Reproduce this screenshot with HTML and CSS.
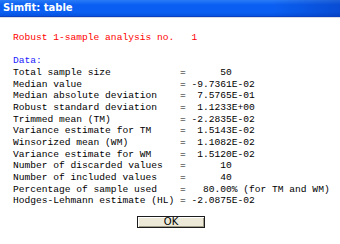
FILE: index.html
```html
<!DOCTYPE html>
<html lang="en">
<head>
    <meta charset="UTF-8">
    <meta name="viewport" content="width=device-width, initial-scale=1.0">
    <title>Simfit: table</title>
    <link rel="stylesheet" href="styles.css">
</head>
<body>
    <div class="window">
        <div class="titlebar">Simfit: table</div>

        <div class="content">
<pre class="report"><span class="heading">Robust 1-sample analysis no.   1</span>

<span class="section">Data:</span>
Total sample size            =      50
Median value                 = -9.7361E-02
Median absolute deviation    =  7.5765E-01
Robust standard deviation    =  1.1233E+00
Trimmed mean (TM)            = -2.2835E-02
Variance estimate for TM     =  1.5143E-02
Winsorized mean (WM)         =  1.1082E-02
Variance estimate for WM     =  1.5120E-02
Number of discarded values   =      10
Number of included values    =      40
Percentage of sample used    =   80.00% (for TM and WM)
Hodges-Lehmann estimate (HL) = -2.0875E-02</pre>

            <div class="actions">
                <button class="btn">OK</button>
            </div>
        </div>
    </div>
</body>
</html>
```

FILE: styles.css
```css
/* Window */
body {
    margin: 0;
    background: #ffffff;
}

.window {
    width: 340px;
    height: 244px;
    background: #ffffff;
    overflow: hidden;
}

.titlebar {
    height: 16px;
    padding-left: 3px;
    font-family: "DejaVu Sans", sans-serif;
    font-weight: bold;
    font-size: 10px;
    line-height: 15px;
    color: #ffffff;
    background: linear-gradient(90deg, rgba(0, 0, 0, 0) 80%, rgba(0, 20, 120, 0.25) 100%),
                linear-gradient(180deg, #2a7bf7 0%, #0a5ff2 30%, #0a5ff2 75%, #0652e0 100%);
    border-bottom: 1px solid #0a3fc0;
    box-shadow: 0 1px 0 #d8dde8;
}

/* Report text */
.content {
    padding: 15px 0 0 13px;
}

.report {
    margin: 0;
    font-family: "Liberation Mono", "Courier New", monospace;
    font-size: 9.6px;
    line-height: 11.65px;
    color: #000000;
}

.heading {
    color: #ff0000;
}

.section {
    color: #1a1aff;
}

/* OK button */
.actions {
    display: flex;
    justify-content: center;
    padding: 9px 11px 0 0;
}

.btn {
    width: 68px;
    height: 12px;
    padding: 0;
    font-family: "DejaVu Sans", sans-serif;
    font-size: 10px;
    line-height: 9px;
    color: #000000;
    background: #ece9d8;
    border: 1px solid #1c1c1c;
    box-shadow: inset 1px 1px 0 #ffffff, inset -1px -1px 0 #a09c88;
}
```
